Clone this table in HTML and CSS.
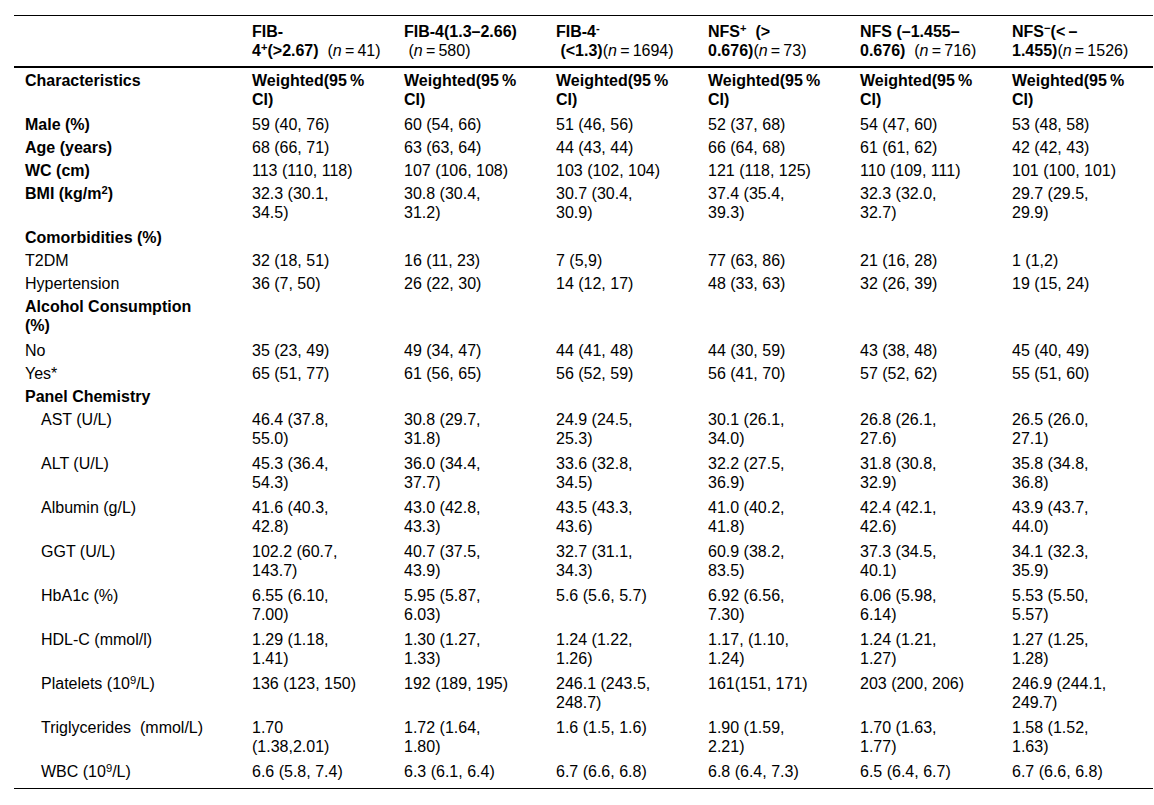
FILE: index.html
```html
<!DOCTYPE html>
<html lang="en">
<head>
<meta charset="utf-8">
<title>Characteristics by FIB-4 and NFS categories</title>
<link rel="stylesheet" href="styles.css">
</head>
<body>
<table class="tbl">
  <colgroup>
    <col class="c-label">
    <col class="c-data"><col class="c-data"><col class="c-data">
    <col class="c-data"><col class="c-data"><col class="c-data">
  </colgroup>
  <thead>
    <tr>
      <th></th>
      <th>FIB-<br>4<sup>+</sup>(&gt;2.67)&nbsp; <span class="n">(<i>n</i>&thinsp;=&thinsp;41)</span></th>
      <th>FIB-4(1.3–2.66)<br>&nbsp;<span class="n">(<i>n</i>&thinsp;=&thinsp;580)</span></th>
      <th>FIB-4<sup>-</sup><br>&nbsp;(&lt;1.3)<span class="n">(<i>n</i>&thinsp;=&thinsp;1694)</span></th>
      <th>NFS<sup>+</sup>&nbsp; (&gt;<br>0.676)<span class="n">(<i>n</i>&thinsp;=&thinsp;73)</span></th>
      <th>NFS (–1.455–<br>0.676)&nbsp; <span class="n">(<i>n</i>&thinsp;=&thinsp;716)</span></th>
      <th>NFS<sup>−</sup>(&lt;&thinsp;–<br>1.455)<span class="n">(<i>n</i>&thinsp;=&thinsp;1526)</span></th>
    </tr>
  </thead>
  <tbody>
    <tr class="first two">
      <th>Characteristics</th>
      <th>Weighted(95&thinsp;%<br>CI)</th>
      <th>Weighted(95&thinsp;%<br>CI)</th>
      <th>Weighted(95&thinsp;%<br>CI)</th>
      <th>Weighted(95&thinsp;%<br>CI)</th>
      <th>Weighted(95&thinsp;%<br>CI)</th>
      <th>Weighted(95&thinsp;%<br>CI)</th>
    </tr>
    <tr>
      <th>Male (%)</th>
      <td>59 (40, 76)</td><td>60 (54, 66)</td><td>51 (46, 56)</td><td>52 (37, 68)</td><td>54 (47, 60)</td><td>53 (48, 58)</td>
    </tr>
    <tr>
      <th>Age (years)</th>
      <td>68 (66, 71)</td><td>63 (63, 64)</td><td>44 (43, 44)</td><td>66 (64, 68)</td><td>61 (61, 62)</td><td>42 (42, 43)</td>
    </tr>
    <tr>
      <th>WC (cm)</th>
      <td>113 (110, 118)</td><td>107 (106, 108)</td><td>103 (102, 104)</td><td>121 (118, 125)</td><td>110 (109, 111)</td><td>101 (100, 101)</td>
    </tr>
    <tr class="two">
      <th>BMI (kg/m<sup>2</sup>)</th>
      <td>32.3 (30.1,<br>34.5)</td><td>30.8 (30.4,<br>31.2)</td><td>30.7 (30.4,<br>30.9)</td><td>37.4 (35.4,<br>39.3)</td><td>32.3 (32.0,<br>32.7)</td><td>29.7 (29.5,<br>29.9)</td>
    </tr>
    <tr>
      <th>Comorbidities (%)</th>
      <td></td><td></td><td></td><td></td><td></td><td></td>
    </tr>
    <tr>
      <td>T2DM</td>
      <td>32 (18, 51)</td><td>16 (11, 23)</td><td>7 (5,9)</td><td>77 (63, 86)</td><td>21 (16, 28)</td><td>1 (1,2)</td>
    </tr>
    <tr>
      <td>Hypertension</td>
      <td>36 (7, 50)</td><td>26 (22, 30)</td><td>14 (12, 17)</td><td>48 (33, 63)</td><td>32 (26, 39)</td><td>19 (15, 24)</td>
    </tr>
    <tr class="two">
      <th>Alcohol Consumption<br>(%)</th>
      <td></td><td></td><td></td><td></td><td></td><td></td>
    </tr>
    <tr>
      <td>No</td>
      <td>35 (23, 49)</td><td>49 (34, 47)</td><td>44 (41, 48)</td><td>44 (30, 59)</td><td>43 (38, 48)</td><td>45 (40, 49)</td>
    </tr>
    <tr>
      <td>Yes*</td>
      <td>65 (51, 77)</td><td>61 (56, 65)</td><td>56 (52, 59)</td><td>56 (41, 70)</td><td>57 (52, 62)</td><td>55 (51, 60)</td>
    </tr>
    <tr>
      <th>Panel Chemistry</th>
      <td></td><td></td><td></td><td></td><td></td><td></td>
    </tr>
    <tr class="two">
      <td class="ind">AST (U/L)</td>
      <td>46.4 (37.8,<br>55.0)</td><td>30.8 (29.7,<br>31.8)</td><td>24.9 (24.5,<br>25.3)</td><td>30.1 (26.1,<br>34.0)</td><td>26.8 (26.1,<br>27.6)</td><td>26.5 (26.0,<br>27.1)</td>
    </tr>
    <tr class="two">
      <td class="ind">ALT (U/L)</td>
      <td>45.3 (36.4,<br>54.3)</td><td>36.0 (34.4,<br>37.7)</td><td>33.6 (32.8,<br>34.5)</td><td>32.2 (27.5,<br>36.9)</td><td>31.8 (30.8,<br>32.9)</td><td>35.8 (34.8,<br>36.8)</td>
    </tr>
    <tr class="two">
      <td class="ind">Albumin (g/L)</td>
      <td>41.6 (40.3,<br>42.8)</td><td>43.0 (42.8,<br>43.3)</td><td>43.5 (43.3,<br>43.6)</td><td>41.0 (40.2,<br>41.8)</td><td>42.4 (42.1,<br>42.6)</td><td>43.9 (43.7,<br>44.0)</td>
    </tr>
    <tr class="two">
      <td class="ind">GGT (U/L)</td>
      <td>102.2 (60.7,<br>143.7)</td><td>40.7 (37.5,<br>43.9)</td><td>32.7 (31.1,<br>34.3)</td><td>60.9 (38.2,<br>83.5)</td><td>37.3 (34.5,<br>40.1)</td><td>34.1 (32.3,<br>35.9)</td>
    </tr>
    <tr class="two">
      <td class="ind">HbA1c (%)</td>
      <td>6.55 (6.10,<br>7.00)</td><td>5.95 (5.87,<br>6.03)</td><td>5.6 (5.6, 5.7)</td><td>6.92 (6.56,<br>7.30)</td><td>6.06 (5.98,<br>6.14)</td><td>5.53 (5.50,<br>5.57)</td>
    </tr>
    <tr class="two">
      <td class="ind">HDL-C (mmol/l)</td>
      <td>1.29 (1.18,<br>1.41)</td><td>1.30 (1.27,<br>1.33)</td><td>1.24 (1.22,<br>1.26)</td><td>1.17, (1.10,<br>1.24)</td><td>1.24 (1.21,<br>1.27)</td><td>1.27 (1.25,<br>1.28)</td>
    </tr>
    <tr class="two">
      <td class="ind">Platelets (10<sup>9</sup>/L)</td>
      <td>136 (123, 150)</td><td>192 (189, 195)</td><td>246.1 (243.5,<br>248.7)</td><td>161(151, 171)</td><td>203 (200, 206)</td><td>246.9 (244.1,<br>249.7)</td>
    </tr>
    <tr class="two">
      <td class="ind">Triglycerides&nbsp; (mmol/L)</td>
      <td>1.70<br>(1.38,2.01)</td><td>1.72 (1.64,<br>1.80)</td><td>1.6 (1.5, 1.6)</td><td>1.90 (1.59,<br>2.21)</td><td>1.70 (1.63,<br>1.77)</td><td>1.58 (1.52,<br>1.63)</td>
    </tr>
    <tr class="last">
      <td class="ind">WBC (10<sup>9</sup>/L)</td>
      <td>6.6 (5.8, 7.4)</td><td>6.3 (6.1, 6.4)</td><td>6.7 (6.6, 6.8)</td><td>6.8 (6.4, 7.3)</td><td>6.5 (6.4, 6.7)</td><td>6.7 (6.6, 6.8)</td>
    </tr>
  </tbody>
</table>
</body>
</html>
```
FILE: styles.css
```css
html, body {
  margin: 0;
  padding: 0;
  background: #ffffff;
}

body {
  font-family: "Liberation Sans", Arial, Helvetica, sans-serif;
  font-size: 16px;
  color: #000000;
}

.tbl {
  margin: 15px 0 0 14px;
  border-collapse: separate;
  border-spacing: 0;
  table-layout: fixed;
  width: 1139px;
}

.c-label { width: 227px; }
.c-data { width: 152px; }

.tbl th,
.tbl td {
  padding: 2px 0 2px 11px;
  line-height: 19px;
  text-align: left;
  vertical-align: top;
  white-space: nowrap;
  overflow: visible;
}

.tbl th { font-weight: bold; }
.tbl td { font-weight: normal; }

.tbl thead th {
  padding: 6px 0 6px 11px;
  border-top: 1px solid #000000;
  border-bottom: 2px solid #000000;
}

.tbl .n { font-weight: normal; }
.tbl .n i { font-style: italic; }

.tbl sup {
  font-size: 0.7em;
  line-height: 0;
  vertical-align: 0.45em;
}

.tbl tr.two > th,
.tbl tr.two > td {
  padding-bottom: 4px;
}

.tbl tr.first > th {
  padding-top: 3px;
}

.tbl td.ind {
  padding-left: 27px;
}

.tbl tr.last > td {
  padding-bottom: 7px;
  border-bottom: 1px solid #000000;
}
```
